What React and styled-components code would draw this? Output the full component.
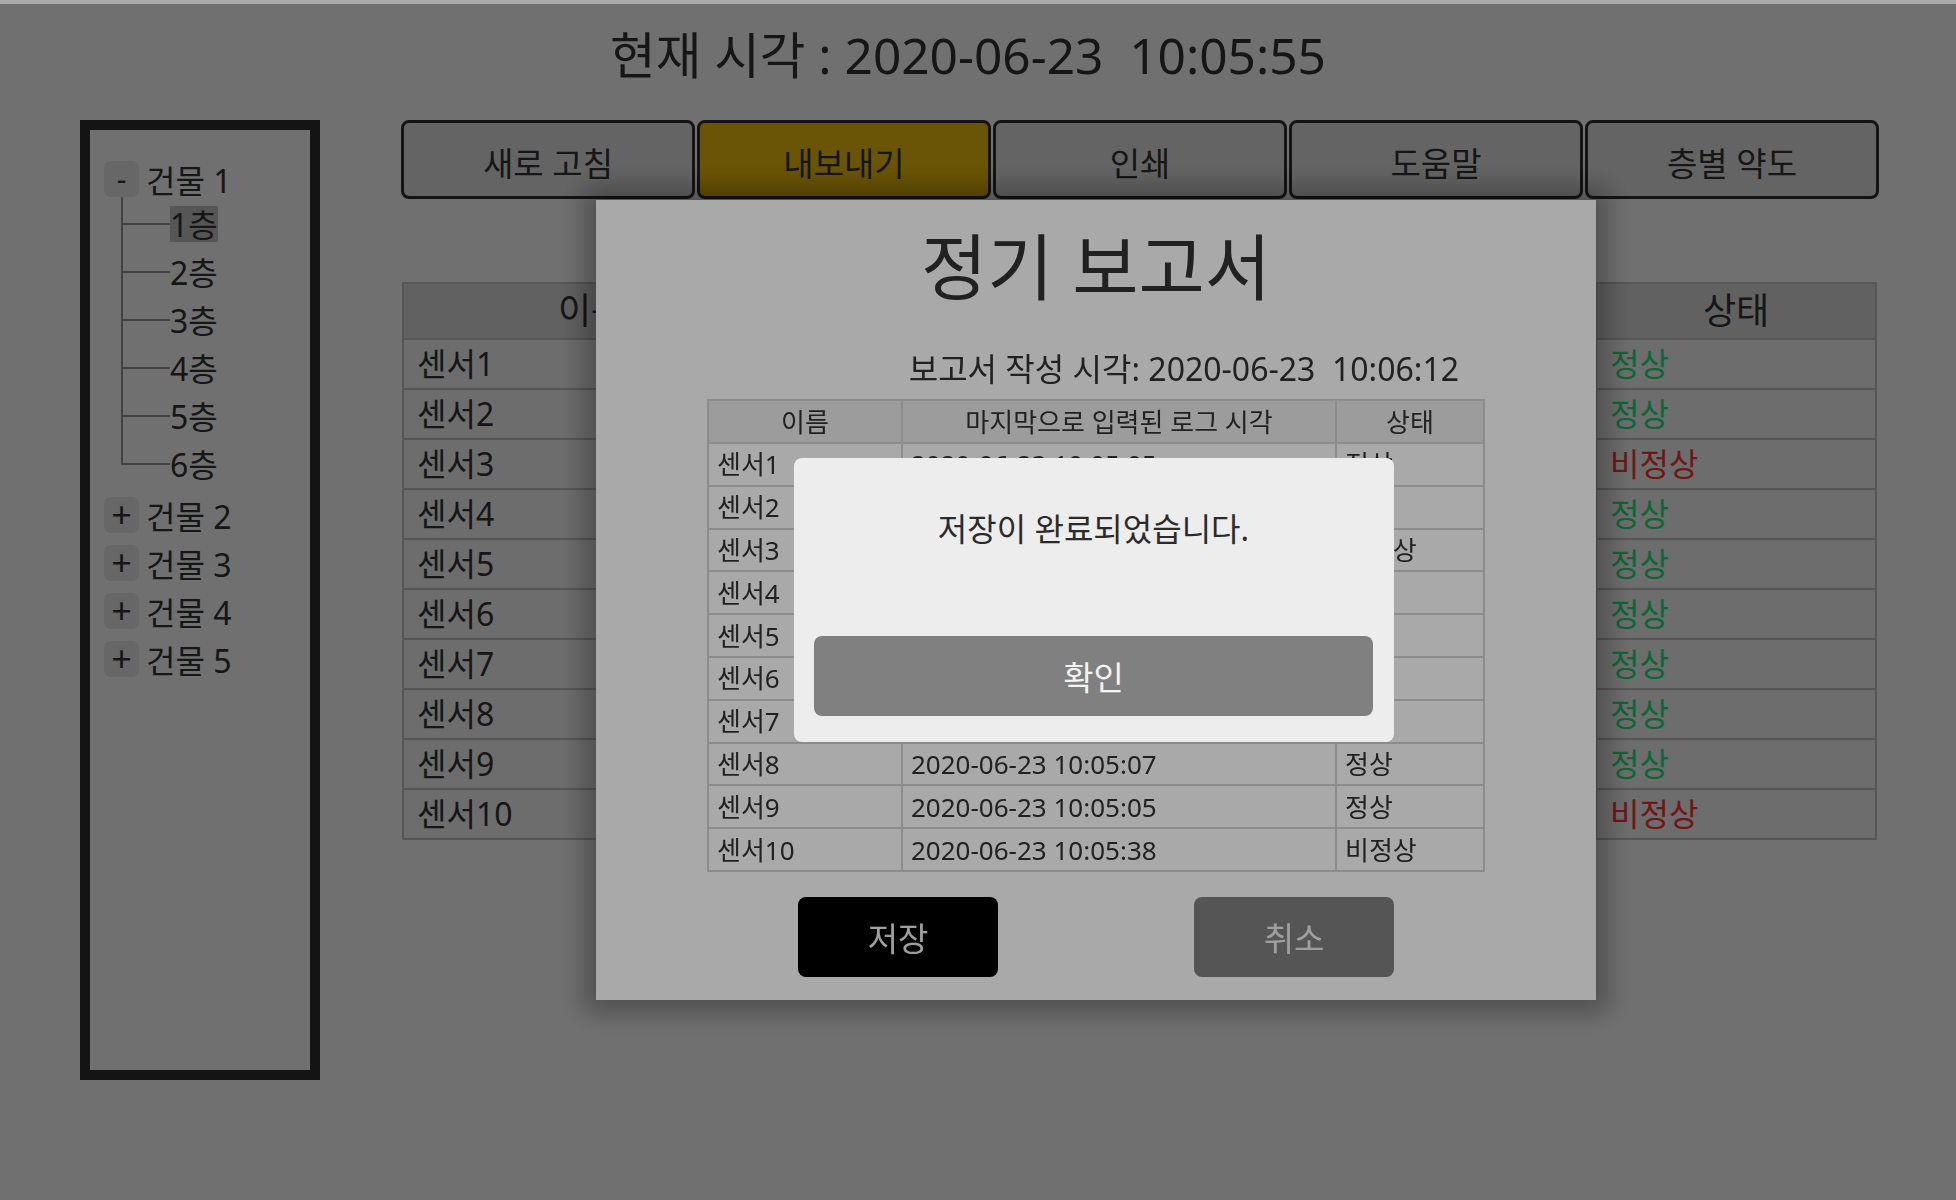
import React from 'react';
import styled, { createGlobalStyle } from 'styled-components';

const GlobalStyle = createGlobalStyle`
  html, body { margin: 0; padding: 0; background: #fff; }
  body { font-family: "Noto Sans", "Noto Sans CJK KR", sans-serif; color: #333; }
  *, *::before, *::after { box-sizing: border-box; }
`;

const Page = styled.div`
  width: 1956px;
  height: 1200px;
  overflow: hidden;
  background: #fff;
`;

const Clock = styled.h1`
  margin: 0;
  height: 120px;
  padding: 20px 20px 0 0;
  text-align: center;
  font-size: 49.6px;
  font-weight: 400;
  line-height: 70px;
  color: #333;
  white-space: pre;
`;

const Main = styled.div`
  display: flex;
  gap: 81px;
  padding-left: 80px;
`;

const TreePanel = styled.nav`
  width: 240px;
  height: 960px;
  border: 10px solid #2e2e2e;
  padding: 25px 14px;
`;

const NodeRow = styled.div`
  display: flex;
  align-items: center;
  gap: 7px;
  height: 48px;
  font-size: 32px;
  line-height: 1;
  color: #333;
`;

const NodeLabel = styled.span`
  padding-top: 4px;
`;

const Toggle = styled.span`
  width: 35px;
  height: 36px;
  border-radius: 7px;
  background: #eaeaea;
  display: flex;
  align-items: center;
  justify-content: center;
  font-size: ${p => (p.$open ? '30px' : '36px')};
  line-height: 1;
  color: #333;
`;

const FloorList = styled.ul`
  list-style: none;
  margin: -3px 0 3px 17px;
  padding: 0;
`;

const FloorItem = styled.li`
  position: relative;
  height: 48px;
  padding-left: 49px;
  display: flex;
  align-items: center;
  font-size: 32px;
  color: #333;

  &::before {
    content: '';
    position: absolute;
    left: 0;
    top: -3px;
    width: 49px;
    height: calc(50% + 4px);
    border-left: 2px solid #9a9a9a;
    border-bottom: 2px solid #9a9a9a;
  }

  &:not(:last-child)::after {
    content: '';
    position: absolute;
    left: 0;
    top: 50%;
    bottom: 0;
    border-left: 2px solid #9a9a9a;
  }
`;

const FloorLabel = styled.span`
  line-height: 34px;
  padding-top: 2px;
  background: ${p => (p.$selected ? '#c4c4c4' : 'transparent')};
`;

const Content = styled.div`
  width: 1478px;
`;

const ButtonBar = styled.div`
  display: grid;
  grid-template-columns: repeat(5, 1fr);
  gap: 2px;
  height: 79px;
`;

const ToolButton = styled.button`
  border: 3px solid #2e2e2e;
  border-radius: 8px;
  background: ${p => (p.$active ? '#f1bf0e' : '#e4e4e4')};
  font-family: inherit;
  font-size: 33px;
  color: #333;
  padding: 4px 0 0;
`;

const SensorTable = styled.table`
  width: 1475px;
  margin: 83px 0 0 1px;
  border-collapse: collapse;
  table-layout: fixed;
  background: #f8f8f8;
`;

const SensorTh = styled.th`
  height: 56px;
  background: #dddddd;
  border: 2px solid #c4c4c4;
  font-size: 36px;
  font-weight: 400;
  line-height: 1;
  color: #333;
  padding: 0;
`;

const statusColor = s => (s === 'ok' ? '#1ee87c' : s === 'bad' ? '#ff3434' : '#333');

const SensorTd = styled.td`
  height: 50px;
  border: 2px solid #c4c4c4;
  padding: 0 0 0 13px;
  font-size: 32px;
  line-height: 1;
  color: ${p => statusColor(p.$status)};
  white-space: nowrap;
  overflow: hidden;
`;

const Dim = styled.div`
  position: fixed;
  left: 0;
  right: 0;
  bottom: 0;
  top: ${p => p.$top || 0}px;
  background: rgba(0, 0, 0, 0.337);
`;

const ReportModal = styled.section`
  position: fixed;
  left: 596px;
  top: 200px;
  width: 1000px;
  height: 800px;
  background: #fff;
  box-shadow: 0 0 24px 14px rgba(0, 0, 0, 0.28);
  padding-top: 19px;
  display: flex;
  flex-direction: column;
  align-items: center;
`;

const ReportTitle = styled.h2`
  margin: 0;
  font-size: 72px;
  font-weight: 400;
  line-height: 94px;
  color: #333;
`;

const ReportTime = styled.p`
  margin: 36px 0 0;
  width: 776px;
  padding-right: 25px;
  text-align: right;
  font-size: 32px;
  line-height: 40px;
  white-space: pre;
  color: #333;
`;

const ReportTable = styled.table`
  margin-top: 10px;
  width: 776px;
  border-collapse: collapse;
  table-layout: fixed;
`;

const ReportTh = styled.th`
  height: 43px;
  background: #ececec;
  border: 2px solid #d4d4d4;
  font-size: 26px;
  font-weight: 400;
  line-height: 1;
  color: #333;
  padding: 0;
`;

const ReportTd = styled.td`
  height: 42.8px;
  border: 2px solid #d4d4d4;
  padding: 0 0 0 8px;
  font-size: 26px;
  line-height: 1;
  color: #333;
  white-space: nowrap;
`;

const ReportActions = styled.div`
  margin-top: 25px;
  display: flex;
  gap: 196px;
`;

const ActionButton = styled.button`
  width: 200px;
  height: 80px;
  border: none;
  border-radius: 8px;
  background: ${p => (p.$primary ? '#000' : '#808080')};
  color: #f0f0f0;
  font-family: inherit;
  font-size: 33px;
  padding: 0;
`;

const AlertBox = styled.div`
  position: fixed;
  left: 794px;
  top: 458px;
  width: 600px;
  height: 284px;
  background: #ededed;
  border-radius: 8px;
  padding: 51px 21px 26px 20px;
  display: flex;
  flex-direction: column;
`;

const AlertMessage = styled.p`
  margin: 0;
  flex: 1;
  text-align: center;
  font-size: 32px;
  line-height: 40px;
  color: #2b2b2b;
`;

const ConfirmButton = styled.button`
  height: 80px;
  border: none;
  border-radius: 8px;
  background: #808080;
  color: #f4f4f4;
  font-family: inherit;
  font-size: 33px;
  padding: 0;
`;

const sensors = [
  { name: '센서1', time: '2020-06-23 10:05:05', status: 'ok' },
  { name: '센서2', time: '2020-06-23 10:05:11', status: 'ok' },
  { name: '센서3', time: '2020-06-23 10:04:52', status: 'bad' },
  { name: '센서4', time: '2020-06-23 10:05:21', status: 'ok' },
  { name: '센서5', time: '2020-06-23 10:05:30', status: 'ok' },
  { name: '센서6', time: '2020-06-23 10:05:14', status: 'ok' },
  { name: '센서7', time: '2020-06-23 10:05:02', status: 'ok' },
  { name: '센서8', time: '2020-06-23 10:05:07', status: 'ok' },
  { name: '센서9', time: '2020-06-23 10:05:05', status: 'ok' },
  { name: '센서10', time: '2020-06-23 10:05:38', status: 'bad' },
];

const statusText = s => (s === 'ok' ? '정상' : '비정상');

const toolButtons = ['새로 고침', '내보내기', '인쇄', '도움말', '층별 약도'];
const floors = ['1층', '2층', '3층', '4층', '5층', '6층'];

export default function App() {
  return (
    <>
      <GlobalStyle />
      <Page>
        <Clock>{'현재 시각 : 2020-06-23  10:05:55'}</Clock>
        <Main>
          <TreePanel>
            <NodeRow>
              <Toggle $open>-</Toggle>
              <NodeLabel>건물 1</NodeLabel>
            </NodeRow>
            <FloorList>
              {floors.map((f, i) => (
                <FloorItem key={f}>
                  <FloorLabel $selected={i === 0}>{f}</FloorLabel>
                </FloorItem>
              ))}
            </FloorList>
            {[2, 3, 4, 5].map(n => (
              <NodeRow key={n}>
                <Toggle>+</Toggle>
                <NodeLabel>건물 {n}</NodeLabel>
              </NodeRow>
            ))}
          </TreePanel>
          <Content>
            <ButtonBar>
              {toolButtons.map((b, i) => (
                <ToolButton key={b} $active={i === 1}>{b}</ToolButton>
              ))}
            </ButtonBar>
            <SensorTable>
              <colgroup>
                <col style={{ width: 376 }} />
                <col />
                <col style={{ width: 280 }} />
              </colgroup>
              <thead>
                <tr>
                  <SensorTh>이름</SensorTh>
                  <SensorTh>마지막으로 입력된 로그 시각</SensorTh>
                  <SensorTh>상태</SensorTh>
                </tr>
              </thead>
              <tbody>
                {sensors.map(s => (
                  <tr key={s.name}>
                    <SensorTd>{s.name}</SensorTd>
                    <SensorTd>{s.time}</SensorTd>
                    <SensorTd $status={s.status}>{statusText(s.status)}</SensorTd>
                  </tr>
                ))}
              </tbody>
            </SensorTable>
          </Content>
        </Main>
      </Page>

      <Dim $top={4} />
      <ReportModal>
        <ReportTitle>정기 보고서</ReportTitle>
        <ReportTime>{'보고서 작성 시각: 2020-06-23  10:06:12'}</ReportTime>
        <ReportTable>
          <colgroup>
            <col style={{ width: 194 }} />
            <col style={{ width: 434 }} />
            <col style={{ width: 148 }} />
          </colgroup>
          <thead>
            <tr>
              <ReportTh>이름</ReportTh>
              <ReportTh>마지막으로 입력된 로그 시각</ReportTh>
              <ReportTh>상태</ReportTh>
            </tr>
          </thead>
          <tbody>
            {sensors.map(s => (
              <tr key={s.name}>
                <ReportTd>{s.name}</ReportTd>
                <ReportTd>{s.time}</ReportTd>
                <ReportTd>{statusText(s.status)}</ReportTd>
              </tr>
            ))}
          </tbody>
        </ReportTable>
        <ReportActions>
          <ActionButton $primary>저장</ActionButton>
          <ActionButton>취소</ActionButton>
        </ReportActions>
      </ReportModal>

      <Dim />
      <AlertBox>
        <AlertMessage>저장이 완료되었습니다.</AlertMessage>
        <ConfirmButton>확인</ConfirmButton>
      </AlertBox>
    </>
  );
}
